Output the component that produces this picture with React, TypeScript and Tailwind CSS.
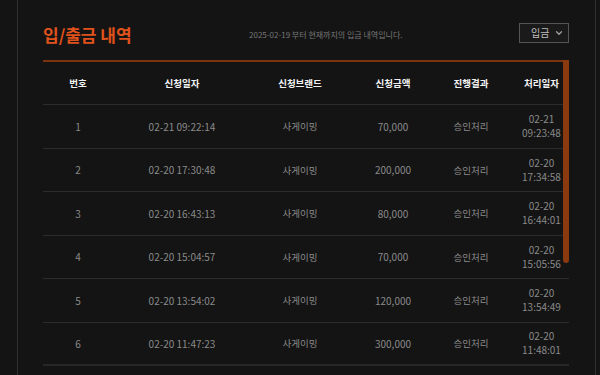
import { ChevronDown } from 'lucide-react';

type Row = {
  no: number;
  requested: string;
  brand: string;
  amount: string;
  status: string;
  processedDate: string;
  processedTime: string;
};

const ROWS: Row[] = [
  { no: 1, requested: '02-21 09:22:14', brand: '사게이밍', amount: '70,000', status: '승인처리', processedDate: '02-21', processedTime: '09:23:48' },
  { no: 2, requested: '02-20 17:30:48', brand: '사게이밍', amount: '200,000', status: '승인처리', processedDate: '02-20', processedTime: '17:34:58' },
  { no: 3, requested: '02-20 16:43:13', brand: '사게이밍', amount: '80,000', status: '승인처리', processedDate: '02-20', processedTime: '16:44:01' },
  { no: 4, requested: '02-20 15:04:57', brand: '사게이밍', amount: '70,000', status: '승인처리', processedDate: '02-20', processedTime: '15:05:56' },
  { no: 5, requested: '02-20 13:54:02', brand: '사게이밍', amount: '120,000', status: '승인처리', processedDate: '02-20', processedTime: '13:54:49' },
  { no: 6, requested: '02-20 11:47:23', brand: '사게이밍', amount: '300,000', status: '승인처리', processedDate: '02-20', processedTime: '11:48:01' },
];

const HEADERS = ['번호', '신청일자', '신청브랜드', '신청금액', '진행결과', '처리일자'];

const COLS = 'grid grid-cols-[70px_138px_98px_88px_68px_1fr]';

export default function App() {
  return (
    <div
      className="w-[600px] h-[375px] bg-[#141414] overflow-hidden"
      style={{ fontFamily: '"Noto Sans CJK KR", "Noto Sans", sans-serif' }}
    >
      <div className="ml-[17px] w-[579px] h-full border-x border-[#303030] pl-[25px] pr-[26px]">
        {/* Title bar */}
        <div className="h-[60px] pt-[8px] flex items-center">
          <h1 className="w-[206px] text-[17px] font-bold text-[#e0521b] leading-none">입/출금 내역</h1>
          <p className="flex-1 text-[8px] text-[#777777] pt-[1px]">2025-02-19 부터 현재까지의 입금 내역입니다.</p>
          <div className="w-[50px] h-[20px] border border-[#555555] bg-[#1a1a1a] flex items-center justify-between pl-[11px] pr-[4px] -mt-[2px]">
            <span className="text-[10px] text-[#bdbdbd] leading-none">입금</span>
            <ChevronDown size={10} strokeWidth={3} className="text-[#a0a0a0]" />
          </div>
        </div>

        {/* Table */}
        <div className="relative border-t-2 border-[#7a3410]">
          <div className={`${COLS} h-[43px] items-center border-b border-[#2c2c2c] text-[9.5px] font-bold text-[#f2f2f2] text-center`}>
            {HEADERS.map((h, i) => (
              <div key={h} className={i === 5 ? 'pl-[9px]' : ''}>{h}</div>
            ))}
          </div>

          {ROWS.map((r, idx) => (
            <div
              key={r.no}
              className={`${COLS} h-[43.5px] items-center text-center text-[10px] text-[#8a8a8a] ${
                idx === ROWS.length - 1 ? 'border-b-2 border-[#262626]' : 'border-b border-[#2c2c2c]'
              }`}
            >
              <div>{r.no}</div>
              <div>{r.requested}</div>
              <div className="text-[9.5px]">{r.brand}</div>
              <div>{r.amount}</div>
              <div className="text-[9.5px]">{r.status}</div>
              <div className="leading-[14px] pl-[9px]">
                <div>{r.processedDate}</div>
                <div>{r.processedTime}</div>
              </div>
            </div>
          ))}

          {/* scrollbar thumb */}
          <div className="absolute right-0 -top-[2px] w-[6px] h-[203px] bg-[#8b3a10] rounded-b-[3px]" />
        </div>
      </div>
    </div>
  );
}
